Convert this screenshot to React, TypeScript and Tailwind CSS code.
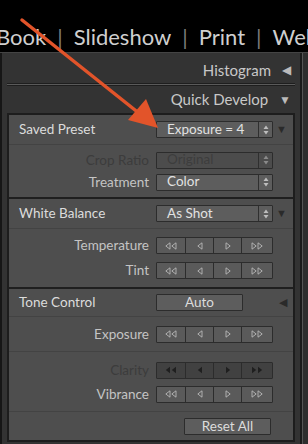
import React from 'react';

const font = { fontFamily: 'Lato, "Open Sans", "Liberation Sans", sans-serif' };

const Spinner: React.FC<{ dim?: boolean }> = ({ dim }) => (
  <div className="w-[14px] h-full border-l border-[#2f2f2f] flex items-center justify-center">
    <svg width="6" height="10" viewBox="0 0 6 10">
      <path d="M3 0.5 L5.5 4 L0.5 4 Z M3 9.5 L5.5 6 L0.5 6 Z" fill={dim ? '#8a8a8a' : '#bdbdbd'} />
    </svg>
  </div>
);

const Select: React.FC<{ value: string; dim?: boolean }> = ({ value, dim }) => (
  <div
    className={`w-[117px] h-[17px] flex items-center border border-[#2c2c2c] rounded-[1px] ${
      dim ? 'bg-[#4c4c4c] text-[#3d3d3d]' : 'bg-[#5d5d5d] text-[#e2e2e2]'
    }`}
  >
    <span className="flex-1 pl-[10px] text-[13.5px] leading-none">{value}</span>
    <Spinner dim={dim} />
  </div>
);

const Tri: React.FC<{ dir: 'l' | 'r'; filled?: boolean }> = ({ dir, filled }) => (
  <svg width="6" height="8" viewBox="0 0 6 8">
    <path
      d={dir === 'l' ? 'M5 0.8 L0.8 4 L5 7.2 Z' : 'M1 0.8 L5.2 4 L1 7.2 Z'}
      fill={filled ? '#1f1f1f' : 'none'}
      stroke={filled ? 'none' : '#b8b8b8'}
      strokeWidth="0.9"
    />
  </svg>
);

const Stepper: React.FC<{ dim?: boolean }> = ({ dim }) => {
  const seg = `h-full flex items-center justify-center ${dim ? 'bg-[#414141]' : 'bg-[#5a5a5a]'}`;
  return (
    <div className="w-[117px] h-[17px] flex border border-[#2c2c2c] rounded-[1px] overflow-hidden">
      <div className={`${seg} w-[29px] border-r border-[#2c2c2c]`}>
        <Tri dir="l" filled={dim} />
        <Tri dir="l" filled={dim} />
      </div>
      <div className={`${seg} w-[28px] border-r border-[#2c2c2c]`}>
        <Tri dir="l" filled={dim} />
      </div>
      <div className={`${seg} w-[28px] border-r border-[#2c2c2c]`}>
        <Tri dir="r" filled={dim} />
      </div>
      <div className={`${seg} flex-1`}>
        <Tri dir="r" filled={dim} />
        <Tri dir="r" filled={dim} />
      </div>
    </div>
  );
};

const Row: React.FC<{ label: string; dim?: boolean; children: React.ReactNode; h: string }> = ({
  label,
  dim,
  children,
  h,
}) => (
  <div className={`flex items-center ${h}`}>
    <span className={`w-[147px] text-right pr-[7px] text-[13.5px] ${dim ? 'text-[#3c3c3c]' : 'text-[#c4c4c4]'}`}>
      {label}
    </span>
    {children}
  </div>
);

const SectionHead: React.FC<{ label: string; children: React.ReactNode; arrow: 'down' | 'left'; h: string }> = ({
  label,
  children,
  arrow,
  h,
}) => (
  <div className={`flex items-center ${h} border-b border-[#434343] pl-[10px]`}>
    <span className="w-[137px] text-[13.5px] text-[#dcdcdc]">{label}</span>
    {children}
    <span className="ml-auto mr-[6px] text-[11px] text-[#2a2a2a]">{arrow === 'down' ? '▼' : '◀'}</span>
  </div>
);

const Button: React.FC<{ label: string }> = ({ label }) => (
  <div className="w-[87px] h-[17px] bg-[#5d5d5d] border border-[#2c2c2c] rounded-[1px] flex items-center justify-center text-[13.5px] leading-none text-[#dcdcdc]">
    {label}
  </div>
);

export default function App() {
  return (
    <div className="w-[308px] h-[444px] bg-black relative overflow-hidden" style={font}>
      <div className="h-[53px] flex items-end pb-[4px] text-[22px] leading-none text-[#cfcfcf] whitespace-nowrap -ml-[4px] border-b border-[#444]">
        <span>Book</span>
        <span className="mx-[11px] text-[#7a7a7a]">|</span>
        <span>Slideshow</span>
        <span className="mx-[11px] text-[#7a7a7a]">|</span>
        <span>Print</span>
        <span className="mx-[11px] text-[#7a7a7a]">|</span>
        <span>Web</span>
      </div>

      <div className="flex h-[391px]">
        <div className="w-[2px] bg-[#161616]" />
        <div className="flex-1 bg-[#333] pt-[4px] px-[5px] border-r-[2px] border-[#1a1a1a]">
          <div className="flex items-center justify-end h-[26px] pr-[4px] text-[15px] text-[#c8c8c8]">
            <span>Histogram</span>
            <span className="ml-[11px] text-[12px] text-[#bbb]">◀</span>
          </div>
          <div className="h-[3px] bg-[#5a5a5a] border-y border-[#1e1e1e]" />
          <div className="flex items-center justify-end h-[27px] pr-[4px] text-[15px] text-[#c8c8c8]">
            <span>Quick Develop</span>
            <span className="ml-[11px] text-[12px] text-[#bbb]">▼</span>
          </div>

          <div className="bg-[#4e4e4e] border-[2px] border-[#1d1d1d] h-[329px]">
            <SectionHead label="Saved Preset" arrow="down" h="h-[30px]">
              <Select value="Exposure = 4" />
            </SectionHead>
            <div className="pt-[4px] pb-[4px]">
              <Row label="Crop Ratio" dim h="h-[22px]">
                <Select value="Original" dim />
              </Row>
              <Row label="Treatment" h="h-[22px]">
                <Select value="Color" />
              </Row>
            </div>
            <div className="h-[2px] bg-[#1f1f1f]" />

            <SectionHead label="White Balance" arrow="down" h="h-[30px]">
              <Select value="As Shot" />
            </SectionHead>
            <div className="pt-[4px] pb-[4px]">
              <Row label="Temperature" h="h-[25px]">
                <Stepper />
              </Row>
              <Row label="Tint" h="h-[25px]">
                <Stepper />
              </Row>
            </div>
            <div className="h-[2px] bg-[#1f1f1f]" />

            <SectionHead label="Tone Control" arrow="left" h="h-[28px]">
              <Button label="Auto" />
            </SectionHead>
            <div className="h-[35px] flex items-center border-b border-[#434343]">
              <Row label="Exposure" h="h-[25px]">
                <Stepper />
              </Row>
            </div>
            <div className="pt-[6px] pb-[5px] border-b border-[#434343]">
              <Row label="Clarity" dim h="h-[24px]">
                <Stepper dim />
              </Row>
              <Row label="Vibrance" h="h-[24px]">
                <Stepper />
              </Row>
            </div>
            <div className="flex justify-end pr-[22px] pt-[6px]">
              <Button label="Reset All" />
            </div>
          </div>
        </div>
        <div className="w-[6px] bg-[#2e2e2e] border-l border-[#555]" />
      </div>

      <svg className="absolute left-0 top-0 pointer-events-none" width="308" height="444">
        <line x1="22" y1="20" x2="140" y2="114" stroke="#e2542a" strokeWidth="3.5" strokeLinecap="round" />
        <path d="M158 128 L128 120 L146 99 Z" fill="#e2542a" />
      </svg>
    </div>
  );
}
